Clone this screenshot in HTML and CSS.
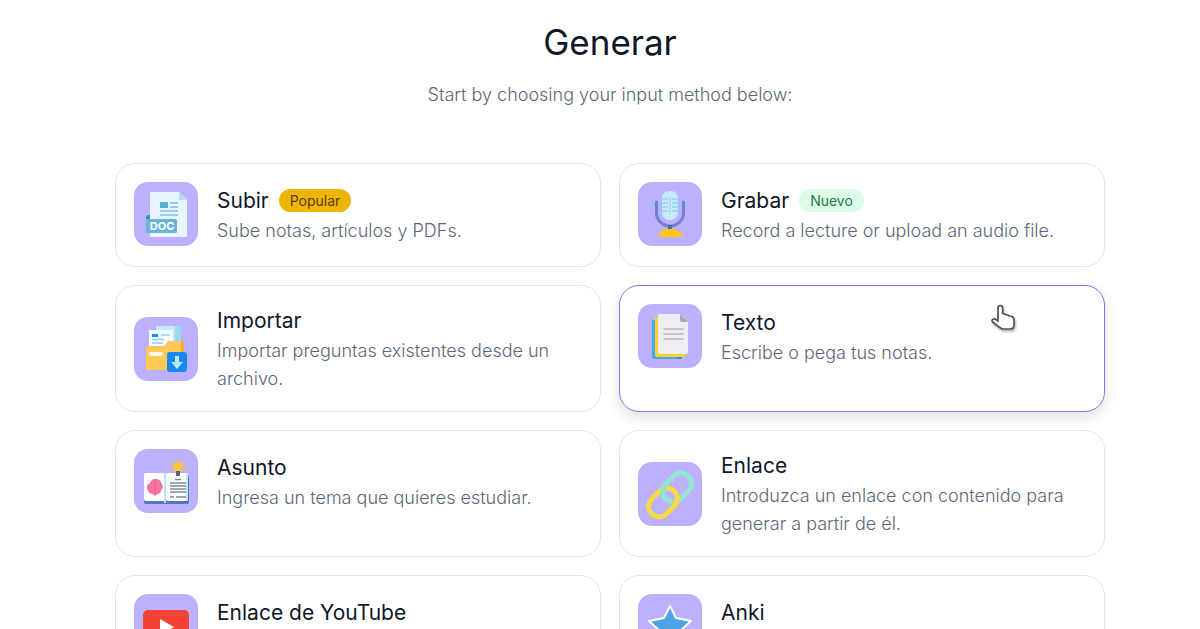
FILE: index.html
```html
<!DOCTYPE html>
<html lang="es">
  <head>
    <meta charset="UTF-8" />
    <meta name="viewport" content="width=device-width, initial-scale=1.0" />
    <title>Generar</title>
    <link rel="stylesheet" href="styles.css">
  </head>
  <body>
    <main class="page">
      <header class="page-header">
        <h1 class="page-title">Generar</h1>
        <p class="page-subtitle">Start by choosing your input method below:</p>
      </header>

      <div class="methods">
        <a class="card" href="#subir">
          <svg class="card-icon" viewBox="0 0 64 64" aria-hidden="true">
            <path d="M16 10h29l8 8v37H16z" fill="#e6f5ff" />
            <path d="M45 10l8 8h-8z" fill="#b5dcf8" />
            <path d="M26 20h8v6h-8z" fill="#5aabd0" />
            <path d="M36 21h8M36 25h8M26 29h18M26 33h18" stroke="#82c0df" stroke-width="1.6" />
            <path d="M12 37v-2q0-2 4-2v4z" fill="#3d8bb3" />
            <rect x="12" y="37" width="31" height="14" rx="1.5" fill="#69b5d9" />
            <text class="doc-label" x="28" y="48" text-anchor="middle">DOC</text>
          </svg>
          <div class="card-body">
            <h2 class="card-title">Subir <span class="badge badge-popular">Popular</span></h2>
            <p class="card-text">Sube notas, artículos y PDFs.</p>
          </div>
        </a>

        <a class="card" href="#grabar">
          <svg class="card-icon" viewBox="0 0 64 64" aria-hidden="true">
            <path d="M15 23h34" stroke="#8fc3f6" stroke-width="3" stroke-linecap="round" />
            <path d="M18.500 20v11a13.500 13 0 0 0 27 0V20" fill="none" stroke="#7580cf" stroke-width="3" stroke-linecap="round" />
            <path d="M32 43v6" stroke="#5965b5" stroke-width="4" />
            <rect x="24" y="9" width="16" height="29" rx="7" fill="#c5e9ff" />
            <path d="M24 17h6M24 21h6M24 25h6M24 29h6M34 17h6M34 21h6M34 25h6M34 29h6" stroke="#9bd0f5" stroke-width="1.3" />
            <path d="M32 15v17" stroke="#a3d4f5" stroke-width="1.3" />
            <path d="M26 47h12l5 5H21z" fill="#ffc51b" />
            <rect x="21" y="51" width="23" height="4" rx="1" fill="#ffc51b" />
          </svg>
          <div class="card-body">
            <h2 class="card-title">Grabar <span class="badge badge-new">Nuevo</span></h2>
            <p class="card-text">Record a lecture or upload an audio file.</p>
          </div>
        </a>

        <a class="card" href="#importar">
          <svg class="card-icon" viewBox="0 0 64 64" aria-hidden="true">
            <path d="M22 9h25v23H22z" fill="#bfe9f8" />
            <path d="M41 9h6v23h-6z" fill="#9dd8ef" />
            <path d="M15 13h24v20H15z" fill="#f6fbff" />
            <path d="M18 18.500h6" stroke="#2587e8" stroke-width="3" />
            <path d="M27 18h9M18 22.500h12M18 26h11" stroke="#8ed2ef" stroke-width="1.4" />
            <path d="M12 31q0-2 2-2h16l4-5h14q2 0 2 2v27H14q-2 0-2-2z" fill="#ffc956" />
            <path d="M47 24q3 0 3 2v10h-3z" fill="#f4ac38" />
            <path d="M17 37h10" stroke="#fff8e8" stroke-width="4" stroke-linecap="round" />
            <rect x="33" y="35" width="20" height="20" rx="3" fill="#1689ef" />
            <path d="M41 39h4v6h4l-6 7-6-7h4z" fill="#b8eaff" />
          </svg>
          <div class="card-body">
            <h2 class="card-title">Importar</h2>
            <p class="card-text">Importar preguntas existentes desde un archivo.</p>
          </div>
        </a>

        <a class="card card-active" href="#texto">
          <svg class="card-icon" viewBox="0 0 64 64" aria-hidden="true">
            <path d="M14 16h25v39H16q-2 0-2-2z" fill="#48a7f5" />
            <path d="M39 52h6l-2 3h-4z" fill="#398de0" />
            <path d="M17 13h30v40H19q-2 0-2-2z" fill="#ffd02a" />
            <path d="M20 12q0-2 2-2h20l8 8v30q0 2-2 2H22q-2 0-2-2z" fill="#eeedf1" />
            <path d="M42 10l8 8h-6q-2 0-2-2z" fill="#aaa7b8" />
            <path d="M26 25h19M26 30h19M26 35h19" stroke="#b8b6bf" stroke-width="1.6" stroke-linecap="round" />
          </svg>
          <div class="card-body">
            <h2 class="card-title">Texto</h2>
            <p class="card-text">Escribe o pega tus notas.</p>
          </div>
          <svg class="pointer" viewBox="0 0 26 28" aria-hidden="true">
            <path d="M8 15V4a2.300 2.300 0 0 1 4.600 0v5.500l9 3q2.400.8 2.400 3.200V21q0 4-4 4h-6.500q-2.200 0-3.500-1.300L2.600 18q-1.200-1.500.2-2.600t3 0L8 17z" fill="#fff" stroke="#515157" stroke-width="1.7" stroke-linejoin="round" />
          </svg>
        </a>

        <a class="card" href="#asunto">
          <svg class="card-icon" viewBox="0 0 64 64" aria-hidden="true">
            <rect x="10" y="27" width="45" height="28" rx="2" fill="#5574bf" />
            <rect x="10" y="24" width="22" height="28" rx="2" fill="#fff" />
            <rect x="32" y="24" width="22" height="28" rx="2" fill="#fff" />
            <path d="M30 24h2v30h-2z" fill="#b6e8f8" />
            <path d="M52 26h2v26h-2z" fill="#b6e8f8" />
            <path d="M21 30c-3 0-4 2-5 4-3 1-4 5-2 7 0 3 3 4 5 4l2 2 2-2c3 0 4-2 4-4 3-2 2-5 0-7 0-3-3-4-6-4z" fill="#f8729d" />
            <path d="M21 31v15" stroke="#e65c8b" />
            <path d="M41 30.500h6M36 34h16M36 37h16M36 40h16M36 43h16M36 48h4M42 48h10" stroke="#7e8b9b" stroke-width="1.300" />
            <circle cx="44" cy="18" r="5" fill="#ffc52e" />
            <path d="M42 22h4v5h-4z" fill="#59677e" />
            <path d="M44 10v1M38 12l1 1M50 12l-1 1M35 16.500h1M52 16.500h1M36 21l1-.5M52 21l-1-.5" stroke="#f0bb62" stroke-width="1.500" stroke-linecap="round" />
          </svg>
          <div class="card-body">
            <h2 class="card-title">Asunto</h2>
            <p class="card-text">Ingresa un tema que quieres estudiar.</p>
          </div>
        </a>

        <a class="card" href="#enlace">
          <svg class="card-icon" viewBox="0 0 64 64" aria-hidden="true">
            <clipPath id="link-cross">
              <path d="M31 32h14v14H31z" />
            </clipPath>
            <g fill="none" stroke-width="5">
              <rect x="9" y="30" width="32" height="21" rx="10.500" transform="rotate(-45 25 40.500)" stroke="#f7da45" />
              <rect x="23" y="15" width="32" height="21" rx="10.500" transform="rotate(-45 39 25.500)" stroke="#91e5d2" />
              <g clip-path="url(#link-cross)">
                <rect x="9" y="30" width="32" height="21" rx="10.500" transform="rotate(-45 25 40.500)" stroke="#f7da45" />
              </g>
            </g>
          </svg>
          <div class="card-body">
            <h2 class="card-title">Enlace</h2>
            <p class="card-text">Introduzca un enlace con contenido para generar a partir de él.</p>
          </div>
        </a>

        <a class="card" href="#youtube">
          <svg class="card-icon" viewBox="0 0 64 64" aria-hidden="true">
            <rect x="9" y="16" width="46" height="34" rx="5" fill="#f44336" />
            <path d="M26 25l14 8-14 8z" fill="#fff" />
          </svg>
          <div class="card-body">
            <h2 class="card-title">Enlace de YouTube</h2>
            <p class="card-text">Pega un enlace de YouTube.</p>
          </div>
        </a>

        <a class="card" href="#anki">
          <svg class="card-icon" viewBox="0 0 64 64" aria-hidden="true">
            <path d="M32 12l6 12 15 3-11 10 3 15-13-7-13 7 3-15-11-10 15-3z" fill="#4ba5e5" stroke="#fff" stroke-width="2" stroke-linejoin="round" />
          </svg>
          <div class="card-body">
            <h2 class="card-title">Anki</h2>
            <p class="card-text">Importa un mazo de Anki.</p>
          </div>
        </a>
      </div>
    </main>
  </body>
</html>
```

FILE: styles.css
```css
* {
  box-sizing: border-box;
}

body {
  margin: 0;
  font-family: Inter, "Noto Sans", sans-serif;
  color: #0f172a;
  background-color: #fff;
}

.page {
  padding: 20px 0 20px 20px;
}

.page-header {
  text-align: center;
  margin-bottom: 54px;
}

.page-title {
  margin: 0 0 17px;
  font-size: 35px;
  line-height: 44px;
  font-weight: 400;
}

.page-subtitle {
  margin: 0;
  font-size: 18px;
  line-height: 28px;
  font-weight: 300;
  color: #5b6779;
}

.methods {
  display: grid;
  grid-template-columns: 1fr 1fr;
  grid-auto-rows: minmax(104px, auto);
  gap: 18px;
  max-width: 990px;
  margin: 0 auto;
}

.card {
  position: relative;
  display: flex;
  flex-wrap: wrap;
  align-items: center;
  align-content: flex-start;
  gap: 19px;
  padding: 18px;
  border: 1px solid #e2e8f0;
  border-radius: 20px;
  color: inherit;
  text-decoration: none;
}

.card-active {
  border-color: #8073f5;
  box-shadow: 0 5px 14px rgba(0, 0, 0, 0.12);
}

.card-icon {
  width: 64px;
  height: 64px;
  border-radius: 14px;
  background-color: #bbb1ff;
}

.card-body {
  flex: 1;
  min-width: 0;
  padding-top: 3px;
}

.card-title {
  display: flex;
  align-items: center;
  gap: 10px;
  margin: 0 0 2px;
  font-size: 21px;
  line-height: 28px;
  font-weight: 400;
}

.card-text {
  margin: 0;
  font-size: 18px;
  line-height: 28px;
  font-weight: 300;
  color: #5b6779;
}

.badge {
  padding: 0 11px;
  border-radius: 12px;
  font-size: 14px;
  line-height: 23px;
}

.badge-popular {
  color: #573e0c;
  background-color: #efb506;
}

.badge-new {
  color: #247a43;
  background-color: #dcfce7;
}

.doc-label {
  font-size: 11px;
  font-weight: 700;
  fill: #fff;
}

.pointer {
  position: absolute;
  top: 18px;
  right: 88px;
  width: 26px;
  height: 28px;
  filter: drop-shadow(1px 2px 1px rgba(0, 0, 0, 0.3));
}
```
